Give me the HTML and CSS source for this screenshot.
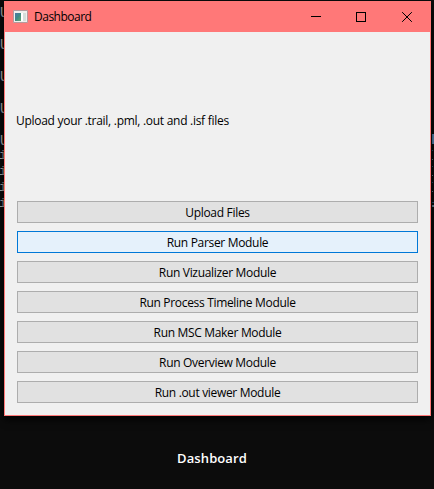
FILE: index.html
```
<!DOCTYPE html>
<html lang="en">
<head>
<meta charset="utf-8">
<title>Dashboard</title>
<link rel="stylesheet" href="styles.css">
</head>
<body>
<div class="desktop">
  <div class="terminal"><span>U</span><span></span><span>U</span><span></span><span>U</span><span></span><span>U</span><span></span><span>U</span><span class="line">i</span><span class="line">i</span><span class="line">i</span><span class="line">i</span></div>
  <svg class="edge" width="2" height="90" viewBox="0 0 2 90" shape-rendering="crispEdges">
    <path d="M0 0h2v10h-2z" fill="#5f91c0"/>
    <path d="M0 16h1v1h-1zM0 32h1v1h-1zM0 48h1v1h-1zM0 68h2v1h-2z" fill="#285878"/>
    <path d="M0 25h1v1h-1zM0 41h1v1h-1zM0 57h1v1h-1zM0 71h2v2h-2z" fill="#7793a5"/>
  </svg>
  <main class="window">
    <header class="titlebar">
      <svg class="app-icon" width="16" height="14" viewBox="0 0 16 14">
        <defs><linearGradient id="pane" x2="1" y2="1"><stop stop-color="#4c78a8"/><stop offset=".5" stop-color="#3f8b87"/><stop offset="1" stop-color="#65a86b"/></linearGradient></defs>
        <path d="M.5.5h14v12h-14z" fill="#f0f0ee" stroke="#b59a9d"/>
        <path d="M2 3h6v8H2z" fill="url(#pane)"/>
        <path d="M8 3h2v8H8z" fill="#fff"/>
        <path d="M10 3h3v8h-3z" fill="#d5dedb"/>
      </svg>
      <h1 class="title">Dashboard</h1>
      <svg class="controls" width="102" height="10" viewBox="0 0 102 10" fill="none" stroke="#000">
        <path d="M0 4.500h10M45.500.5h9v9h-9z" shape-rendering="crispEdges"/>
        <path d="M91.500.5l9 9M100.500.5l-9 9" stroke-linecap="square"/>
      </svg>
    </header>
    <p class="message">Upload your .trail, .pml, .out and .isf files</p>
    <div class="actions">
      <button class="upload">Upload Files</button>
      <button class="active">Run Parser Module</button>
      <button>Run Vizualizer Module</button>
      <button>Run Process Timeline Module</button>
      <button>Run MSC Maker Module</button>
      <button>Run Overview Module</button>
      <button>Run .out viewer Module</button>
    </div>
  </main>
  <p class="caption">Dashboard</p>
</div>
</body>
</html>
```
FILE: styles.css
```
* { box-sizing: border-box; }
body { margin: 0; background: #0c0c0c; font: 12px/16px "Open Sans", "Noto Sans", sans-serif; color: #000; }
.desktop { position: relative; height: 489px; padding: 1px 3px 0 4px; overflow: hidden; }
.terminal { position: absolute; top: 5px; left: 0; color: #bbb; font: 14px/16px "Liberation Mono", monospace; }
.terminal span { display: block; height: 16px; }
.terminal .line { margin-left: -1px; font-size: 13px; line-height: 14px; }
.edge { position: absolute; top: 134px; right: 0; }
.window { position: relative; display: flex; flex-direction: column; width: 427px; height: 415px; background: #f0f0f0; border: 1px solid #ff7878; box-shadow: 0 3px 8px #000; }
.titlebar { display: flex; align-items: center; height: 30px; padding: 0 17px 0 8px; background: #ff7878; }
.title { margin: 0 0 0 5px; font-size: 12px; font-weight: 400; letter-spacing: -.5px; }
.controls { margin-left: auto; }
.message { display: flex; align-items: center; height: 169px; margin: 0 11px; padding-top: 8px; letter-spacing: -.28px; }
.actions { display: grid; gap: 8px; padding: 0 12px; }
button { height: 22px; padding: 2px 0 0; border: 1px solid #adadad; background: #e1e1e1; color: #000; font: inherit; letter-spacing: -.32px; }
.upload { letter-spacing: -.3px; }
.active { border-color: #0078d7; background: #e5f1fb; }
.caption { margin: 32px 0 0; padding-right: 11px; text-align: center; color: #fff; font-size: 13px; line-height: 20px; font-weight: 600; letter-spacing: .1px; }
```
